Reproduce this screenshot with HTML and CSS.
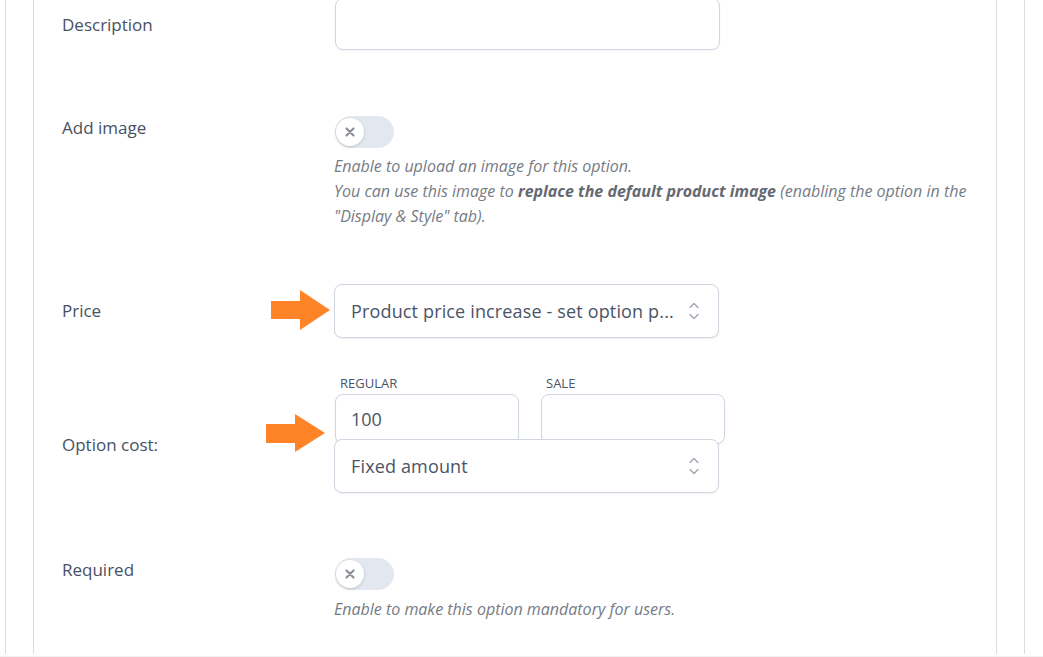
FILE: index.html
```html
<!DOCTYPE html>
<html>
<head>
<meta charset="utf-8">
<link rel="stylesheet" href="styles.css">
</head>
<body>
<div class="page">
  <div class="frame">
    <div class="card">
      <div class="row row-desc">
        <div class="label">Description</div>
        <div class="field"><div class="input input-desc"></div></div>
      </div>

      <div class="row row-image">
        <div class="label">Add image</div>
        <div class="field">
          <div class="toggle"><span class="knob"><svg width="10" height="10" viewBox="0 0 10 10"><path d="M1.5 1.5 L8.5 8.5 M8.5 1.5 L1.5 8.5" stroke="#8b8f96" stroke-width="2.2" stroke-linecap="round"/></svg></span></div>
          <p class="help">Enable to upload an image for this option.<br>You can use this image to <b>replace the default product image</b> (enabling the option in the<br>"Display &amp; Style" tab).</p>
        </div>
      </div>

      <div class="row row-price">
        <div class="label">Price</div>
        <div class="field">
          <div class="select">
            <span class="select-text">Product price increase - set option p...</span>
            <svg class="chev" width="12" height="20" viewBox="0 0 12 20"><path d="M2 6.5 L6 2.5 L10 6.5 M2 13.5 L6 17.5 L10 13.5" fill="none" stroke="#9aa3b0" stroke-width="1.3" stroke-linecap="round" stroke-linejoin="round"/></svg>
          </div>
          <svg class="arrow arrow-1" width="60" height="42" viewBox="0 0 60 42"><polygon points="0,11 29,11 29,0 59,20 29,40 29,29 0,29" fill="#ff8427"/></svg>
        </div>
      </div>

      <div class="row row-cost">
        <div class="label">Option cost:</div>
        <div class="field">
          <div class="prices">
            <div class="price-col">
              <div class="mini">REGULAR</div>
              <div class="input input-price"><span>100</span></div>
            </div>
            <div class="price-col">
              <div class="mini">SALE</div>
              <div class="input input-price"></div>
            </div>
          </div>
          <div class="select select-fixed">
            <span class="select-text">Fixed amount</span>
            <svg class="chev" width="12" height="20" viewBox="0 0 12 20"><path d="M2 6.5 L6 2.5 L10 6.5 M2 13.5 L6 17.5 L10 13.5" fill="none" stroke="#9aa3b0" stroke-width="1.3" stroke-linecap="round" stroke-linejoin="round"/></svg>
          </div>
          <svg class="arrow arrow-2" width="60" height="40" viewBox="0 0 60 40"><polygon points="0,10 29,10 29,0 59,19 29,38 29,29 0,29" fill="#ff8427"/></svg>
        </div>
      </div>

      <div class="row row-req">
        <div class="label">Required</div>
        <div class="field">
          <div class="toggle"><span class="knob"><svg width="10" height="10" viewBox="0 0 10 10"><path d="M1.5 1.5 L8.5 8.5 M8.5 1.5 L1.5 8.5" stroke="#8b8f96" stroke-width="2.2" stroke-linecap="round"/></svg></span></div>
          <p class="help">Enable to make this option mandatory for users.</p>
        </div>
      </div>
    </div>
  </div>
</div>
</body>
</html>
```

FILE: styles.css
```css
html, body {
  margin: 0;
  padding: 0;
  background: #ffffff;
}
body {
  font-family: "Open Sans", "Noto Sans", sans-serif;
  color: #465162;
  overflow: hidden;
}
.page {
  width: 1043px;
  height: 656px;
  border-bottom: 1px solid #f1f1f1;
  overflow: hidden;
}
.frame {
  margin-left: 5px;
  width: 1020px;
  height: 100%;
  border-left: 1px solid #dcdcdc;
  border-right: 1px solid #dcdcdc;
  padding-left: 27px;
  box-sizing: border-box;
}
.card {
  width: 964px;
  height: 100%;
  border-left: 1px solid #dcdcdc;
  border-right: 1px solid #dcdcdc;
  box-sizing: border-box;
  padding-left: 28px;
}
.row {
  display: grid;
  grid-template-columns: 273px 1fr;
}
.label {
  font-size: 17px;
  line-height: 24px;
  color: #465164;
}
.field {
  position: relative;
}
.input {
  border: 1px solid #cfd6e2;
  border-radius: 8px;
  background: #fff;
  box-sizing: border-box;
  box-shadow: 0 1px 2px rgba(15, 23, 42, 0.05);
}
.row-desc {
  align-items: center;
  margin-top: -2px;
}
.row-desc .label {
  padding-top: 2px;
}
.input-desc {
  width: 385px;
  height: 52px;
}
.row-image {
  margin-top: 66px;
}
.toggle {
  width: 59px;
  height: 32px;
  border-radius: 16px;
  background: #e3e8f0;
  position: relative;
}
.knob {
  position: absolute;
  left: 1px;
  top: 2px;
  width: 28px;
  height: 28px;
  border-radius: 50%;
  background: #fff;
  box-shadow: 0 1px 3px rgba(0,0,0,0.18);
  display: flex;
  align-items: center;
  justify-content: center;
}
.help {
  margin: 6px 0 0 -1px;
  font-size: 16px;
  line-height: 25px;
  font-style: italic;
  color: #767b84;
}
.help b {
  font-weight: 700;
  color: #656a72;
}
.row-price {
  margin-top: 55px;
  align-items: center;
}
.select {
  width: 385px;
  height: 54px;
  border: 1px solid #cfd6e2;
  border-radius: 8px;
  background: #fff;
  box-sizing: border-box;
  display: flex;
  align-items: center;
  padding: 0 18px 0 16px;
  box-shadow: 0 1px 2px rgba(15, 23, 42, 0.06);
  margin-left: -1px;
}
.select-text {
  flex: 1;
  font-size: 18px;
  color: #4a5466;
  white-space: nowrap;
  letter-spacing: 0.15px;
}
.chev {
  flex: none;
}
.arrow {
  position: absolute;
}
.arrow-1 {
  left: -64px;
  top: 6px;
}
.row-cost {
  margin-top: 37px;
}
.row-cost .label {
  padding-top: 58px;
}
.prices {
  display: flex;
  gap: 22px;
}
.price-col {
  width: 184px;
}
.mini {
  font-size: 13px;
  line-height: 16px;
  color: #4a5466;
  padding-left: 5px;
  margin-bottom: 3px;
}
.input-price {
  height: 50px;
  display: flex;
  align-items: center;
  padding-left: 15px;
  font-size: 18px;
  color: #4a5466;
}
.select-fixed {
  margin-top: -5px;
  position: relative;
}
.arrow-2 {
  left: -69px;
  top: 39px;
}
.row-req {
  margin-top: 65px;
}
.row-req .help {
  margin-top: 7px;
}
```
